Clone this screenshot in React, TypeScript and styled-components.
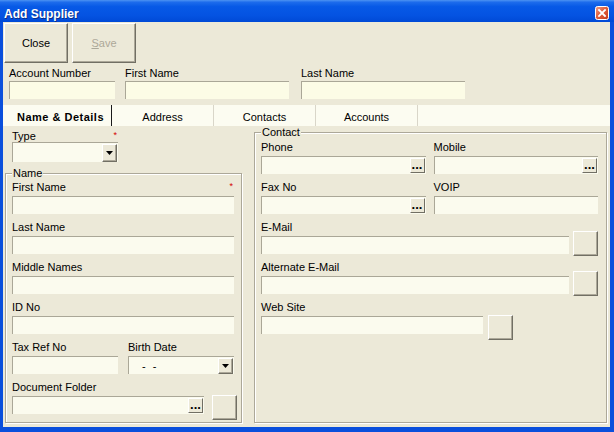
import React from 'react';
import styled, { createGlobalStyle } from 'styled-components';

const Global = createGlobalStyle`
  html, body { margin: 0; padding: 0; background: #0a4fdc; }
  body { font-family: "Liberation Sans", Arial, sans-serif; font-size: 11px; color: #000; }
  * { box-sizing: border-box; }
`;

const Window = styled.div`
  width: 614px;
  height: 432px;
  display: flex;
  flex-direction: column;
  background: #0a4fdc;
`;

const TitleBar = styled.div`
  height: 22px;
  flex: none;
  display: flex;
  justify-content: space-between;
  align-items: flex-start;
  padding: 0 5px 0 4px;
  background: linear-gradient(180deg, #4d93f2 0%, #1d6cec 10%, #0759e6 30%, #0453e2 70%, #0049d6 100%);
`;

const Title = styled.div`
  margin-top: 7px;
  font-size: 12px;
  line-height: 14px;
  font-weight: bold;
  color: #fff;
  text-shadow: 1px 1px 0 #0a2f8a;
`;

const CloseX = styled.div`
  margin-top: 6px;
  width: 14px;
  height: 14px;
  display: flex;
`;

const Frame = styled.div`
  flex: 1;
  display: flex;
  padding: 0 4px 5px 3px;
  min-height: 0;
`;

const Body = styled.div`
  flex: 1;
  display: flex;
  flex-direction: column;
  background: #ece9d8;
  padding-top: 1px;
  min-height: 0;
`;

const Toolbar = styled.div`
  display: flex;
  gap: 4px;
  padding-left: 1px;
`;

const ToolButton = styled.div<{ $disabled?: boolean }>`
  width: 64px;
  height: 40px;
  display: flex;
  align-items: center;
  justify-content: center;
  font-size: 11px;
  color: ${p => (p.$disabled ? '#aca899' : '#000')};
  background: #ece9d8;
  border: 1px solid;
  border-color: #fff #716f64 #716f64 #fff;
  box-shadow: inset -1px -1px 0 #aca899;
`;

const HeaderRow = styled.div`
  display: flex;
  margin-top: 4px;
  padding-left: 6px;
`;

const HeaderField = styled.div<{ $w: number; $ml?: number }>`
  width: ${p => p.$w}px;
  margin-left: ${p => p.$ml ?? 0}px;
  display: flex;
  flex-direction: column;
`;

const Label = styled.div`
  line-height: 13px;
  height: 13px;
  white-space: nowrap;
`;

const HeaderLabel = styled(Label)`
  margin-bottom: 1px;
`;

const TabStrip = styled.div`
  margin-top: 6px;
  height: 21px;
  flex: none;
  display: flex;
  padding-left: 7px;
  background: #fcfcf1;
`;

const Tab = styled.div<{ $active?: boolean }>`
  width: 102px;
  height: 100%;
  display: flex;
  align-items: center;
  justify-content: center;
  padding-top: 2px;
  font-weight: ${p => (p.$active ? 'bold' : 'normal')};
  letter-spacing: ${p => (p.$active ? '0.5px' : '0')};
  border-right: 1px solid ${p => (p.$active ? '#1a1a1a' : '#d9d6c9')};
`;

const Content = styled.div`
  flex: 1;
  display: flex;
  gap: 12px;
  padding: 0 3px 4px 2px;
  min-height: 0;
`;

const LeftColumn = styled.div`
  width: 237px;
  display: flex;
  flex-direction: column;
`;

const TypeField = styled.div`
  margin: 4px 0 0 7px;
  width: 106px;
  display: flex;
  flex-direction: column;
`;

const LabelRow = styled.div<{ $gap?: number }>`
  height: 13px;
  line-height: 13px;
  display: flex;
  justify-content: space-between;
  align-items: flex-start;
  margin-bottom: ${p => p.$gap ?? 2}px;
  white-space: nowrap;
`;

const Req = styled.span`
  color: #d40000;
  font-size: 9px;
  line-height: 9px;
  margin: 1px 1px 0 0;
`;

const Group = styled.fieldset<{ $mt?: number }>`
  margin: ${p => p.$mt ?? 0}px 0 0 0;
  padding: 1px 4px 0 6px;
  border: 1px solid #aca899;
  box-shadow: inset 1px 1px 0 #fff, 1px 1px 0 #fff;
  flex: 1;
  min-width: 0;
`;

const GroupRight = styled(Group)`
  padding: 2px 8px 0 6px;
`;

const Legend = styled.legend`
  padding: 0 1px;
  line-height: 13px;
  font-size: 11px;
  background: #ece9d8;
`;

const Stack = styled.div`
  display: flex;
  flex-direction: column;
  gap: 7px;
`;

const Field = styled.div<{ $w?: number }>`
  display: flex;
  flex-direction: column;
  width: ${p => (p.$w ? `${p.$w}px` : 'auto')};
  flex: ${p => (p.$w ? 'none' : '1')};
  min-width: 0;
`;

const Row = styled.div<{ $gap: number }>`
  display: flex;
  align-items: flex-start;
  gap: ${p => p.$gap}px;
`;

const Pair = styled.div`
  display: grid;
  grid-template-columns: 1fr 1fr;
  column-gap: 8px;
`;

const Box = styled.div<{ $h?: number; $tone?: 'header' | 'field' }>`
  height: ${p => p.$h ?? 18}px;
  width: 100%;
  display: flex;
  justify-content: flex-end;
  align-items: center;
  background: ${p => (p.$tone === 'header' ? '#fcfce6' : '#fbfbee')};
  border-top: 1px solid #aaa797;
  border-left: 1px solid #aaa797;
  padding-right: 1px;
  font-size: 11px;
`;

const DateText = styled.span`
  flex: 1;
  padding-left: 13px;
  letter-spacing: 2px;
`;

const Ellipsis = styled.div`
  width: 15px;
  height: 15px;
  display: flex;
  align-items: flex-end;
  justify-content: center;
  padding-bottom: 3px;
  font-weight: bold;
  font-size: 13px;
  line-height: 9px;
  letter-spacing: 0;
  background: #ece9d8;
  border: 1px solid;
  border-color: #fff #716f64 #716f64 #fff;
`;

const ArrowBtn = styled.div`
  width: 15px;
  height: calc(100% - 1px);
  display: flex;
  align-items: center;
  justify-content: center;
  background: #ece9d8;
  border: 1px solid;
  border-color: #fff #716f64 #716f64 #fff;
  box-shadow: inset -1px -1px 0 #aca899;
`;

const SideBtn = styled.div<{ $mt: number }>`
  width: 25px;
  height: 25px;
  flex: none;
  margin-top: ${p => p.$mt}px;
  margin-bottom: ${p => 8 - p.$mt}px;
  background: #ece9d8;
  border: 1px solid;
  border-color: #fff #716f64 #716f64 #fff;
  box-shadow: inset -1px -1px 0 #aca899;
`;

const Arrow = () => (
  <svg width="7" height="4" viewBox="0 0 7 4">
    <polygon points="0,0 7,0 3.5,4" fill="#000" />
  </svg>
);

const Combo: React.FC<{ h?: number; children?: React.ReactNode }> = ({ h, children }) => (
  <Box $h={h}>
    {children ?? <span style={{ flex: 1 }} />}
    <ArrowBtn>
      <Arrow />
    </ArrowBtn>
  </Box>
);

const TextField: React.FC<{ label: string; req?: boolean; dots?: boolean; w?: number }> = ({ label, req, dots, w }) => (
  <Field $w={w}>
    <LabelRow>
      <span>{label}</span>
      {req && <Req>*</Req>}
    </LabelRow>
    <Box>{dots && <Ellipsis>...</Ellipsis>}</Box>
  </Field>
);

export default function App() {
  return (
    <>
      <Global />
      <Window>
        <TitleBar>
          <Title>Add Supplier</Title>
          <CloseX>
            <svg width="14" height="14" viewBox="0 0 14 14">
              <defs>
                <linearGradient id="cx" x1="0" y1="0" x2="1" y2="1">
                  <stop offset="0" stopColor="#f0a08a" />
                  <stop offset="0.45" stopColor="#e0603e" />
                  <stop offset="1" stopColor="#c4381a" />
                </linearGradient>
              </defs>
              <rect x="0.5" y="0.5" width="13" height="13" rx="2" fill="url(#cx)" stroke="#fff" />
              <path d="M4 4 L10 10 M10 4 L4 10" stroke="#fff" strokeWidth="1.8" strokeLinecap="square" />
            </svg>
          </CloseX>
        </TitleBar>
        <Frame>
          <Body>
            <Toolbar>
              <ToolButton>Close</ToolButton>
              <ToolButton $disabled>
                <span>
                  <u>S</u>ave
                </span>
              </ToolButton>
            </Toolbar>
            <HeaderRow>
              <HeaderField $w={106}>
                <HeaderLabel>Account Number</HeaderLabel>
                <Box $tone="header" />
              </HeaderField>
              <HeaderField $w={164} $ml={10}>
                <HeaderLabel>First Name</HeaderLabel>
                <Box $tone="header" />
              </HeaderField>
              <HeaderField $w={164} $ml={12}>
                <HeaderLabel>Last Name</HeaderLabel>
                <Box $tone="header" />
              </HeaderField>
            </HeaderRow>
            <TabStrip>
              <Tab $active>Name &amp; Details</Tab>
              <Tab>Address</Tab>
              <Tab>Contacts</Tab>
              <Tab>Accounts</Tab>
            </TabStrip>
            <Content>
              <LeftColumn>
                <TypeField>
                  <LabelRow $gap={-1}>
                    <span>Type</span>
                    <Req>*</Req>
                  </LabelRow>
                  <Combo h={20} />
                </TypeField>
                <Group $mt={5}>
                  <Legend>Name</Legend>
                  <Stack>
                    <TextField label="First Name" req w={222} />
                    <TextField label="Last Name" w={222} />
                    <TextField label="Middle Names" w={222} />
                    <TextField label="ID No" w={222} />
                    <Row $gap={10}>
                      <TextField label="Tax Ref No" w={106} />
                      <Field $w={106}>
                        <LabelRow>
                          <span>Birth Date</span>
                        </LabelRow>
                        <Combo>
                          <DateText>- -</DateText>
                        </Combo>
                      </Field>
                    </Row>
                    <Row $gap={8}>
                      <TextField label="Document Folder" dots w={192} />
                      <SideBtn $mt={14} />
                    </Row>
                  </Stack>
                </Group>
              </LeftColumn>
              <GroupRight>
                <Legend>Contact</Legend>
                <Stack>
                  <Pair>
                    <TextField label="Phone" dots />
                    <TextField label="Mobile" dots />
                  </Pair>
                  <Pair>
                    <TextField label="Fax No" dots />
                    <TextField label="VOIP" />
                  </Pair>
                  <Row $gap={4}>
                    <TextField label="E-Mail" />
                    <SideBtn $mt={10} />
                  </Row>
                  <Row $gap={4}>
                    <TextField label="Alternate E-Mail" />
                    <SideBtn $mt={10} />
                  </Row>
                  <Row $gap={5}>
                    <TextField label="Web Site" w={222} />
                    <SideBtn $mt={14} />
                  </Row>
                </Stack>
              </GroupRight>
            </Content>
          </Body>
        </Frame>
      </Window>
    </>
  );
}
